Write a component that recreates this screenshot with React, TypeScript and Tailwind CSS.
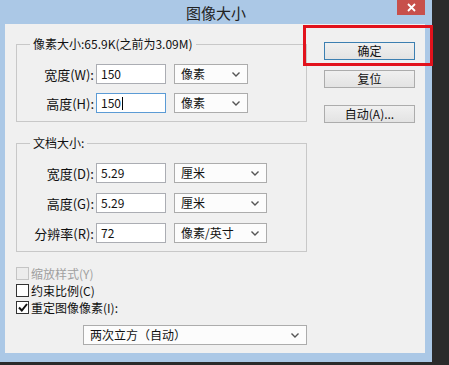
const font = "font-['Microsoft_YaHei','Noto_Sans_CJK_SC','Noto_Sans',sans-serif]";

const Chevron = () => (
  <svg width="8" height="5" viewBox="0 0 8 5" className="shrink-0">
    <polyline points="0.5,0.5 4,4 7.5,0.5" fill="none" stroke="#555" strokeWidth="1.4" />
  </svg>
);

const Select = ({ value, width }: { value: string; width: string }) => (
  <div
    className={`flex h-[20px] items-center justify-between border border-[#acacac] bg-[#fcfcfc] pl-[6px] pr-[7px] text-[12px] leading-none ${width}`}
  >
    <span>{value}</span>
    <Chevron />
  </div>
);

const Field = ({
  label,
  value,
  unit,
  selectWidth,
  focused,
}: {
  label: string;
  value: string;
  unit: string;
  selectWidth: string;
  focused?: boolean;
}) => (
  <div className="flex h-[20px] items-center">
    <span className="w-[77px] text-right text-[13px] leading-none">{label}</span>
    <div
      className={`ml-[2px] flex h-[20px] w-[70px] items-center border bg-white pl-[4px] text-[12px] leading-none ${
        focused ? "border-[#5b9bd5]" : "border-[#abadb3]"
      }`}
    >
      {value}
      {focused && <span className="ml-px h-[13px] w-px bg-black" />}
    </div>
    <div className="ml-[8px]">
      <Select value={unit} width={selectWidth} />
    </div>
  </div>
);

const Group = ({ title, children }: { title: string; children: React.ReactNode }) => (
  <fieldset className="ml-[11px] w-[291px] border border-[#c8c8c8] pb-[8px] pt-[12px]">
    <legend className="ml-[13px] px-[3px] text-[12px] leading-[16px]">{title}</legend>
    <div className="flex flex-col gap-[9px]">{children}</div>
  </fieldset>
);

const Check = ({ label, checked, disabled }: { label: string; checked?: boolean; disabled?: boolean }) => (
  <div className={`ml-[11px] flex h-[17px] items-center gap-[2px] text-[12px] leading-none ${disabled ? "text-[#a0a0a0]" : ""}`}>
    <span
      className={`flex h-[13px] w-[13px] items-center justify-center border ${
        disabled ? "border-[#c4c4c4] bg-[#ececec]" : "border-[#333] bg-white"
      }`}
    >
      {checked && (
        <svg width="10" height="9" viewBox="0 0 10 9">
          <polyline points="1,4.5 3.8,7.5 9,1" fill="none" stroke="#111" strokeWidth="2" />
        </svg>
      )}
    </span>
    <span>{label}</span>
  </div>
);

const Button = ({ label, primary, className }: { label: string; primary?: boolean; className?: string }) => (
  <div
    className={`flex h-[18px] w-[91px] items-center justify-center border bg-gradient-to-b from-[#f0f0f0] to-[#e3e3e3] text-[12px] leading-none ${
      primary ? "border-[#3c7fb1]" : "border-[#acacac]"
    } ${className ?? ""}`}
  >
    {label}
  </div>
);

export default function App() {
  return (
    <div className={`h-[365px] w-[449px] overflow-hidden bg-[#2b2b2b] text-[#111] ${font}`}>
      <div className="relative flex h-[362px] w-[432px] flex-col bg-[#abc8e6]">
        <div className="flex h-[24px] items-center justify-center text-[15px] leading-none text-[#222]">
          图像大小
        </div>
        <div className="absolute right-[7px] top-0 flex h-[15px] w-[28px] items-center justify-center bg-[#c7504b]">
          <svg width="9" height="9" viewBox="0 0 9 9">
            <path d="M1 1 L8 8 M8 1 L1 8" stroke="#fff" strokeWidth="1.8" />
          </svg>
        </div>

        <div className="ml-[5px] flex h-[329px] w-[420px] bg-[#f0f0f0]">
          <div className="flex w-[302px] flex-col">
            <div className="mt-[12px]">
              <Group title="像素大小:65.9K(之前为3.09M)">
                <Field label="宽度(W):" value="150" unit="像素" selectWidth="w-[74px]" />
                <Field label="高度(H):" value="150" unit="像素" selectWidth="w-[74px]" focused />
              </Group>
            </div>
            <div className="mt-[13px]">
              <Group title="文档大小:">
                <div className="flex flex-col gap-[10px]">
                  <Field label="宽度(D):" value="5.29" unit="厘米" selectWidth="w-[93px]" />
                  <Field label="高度(G):" value="5.29" unit="厘米" selectWidth="w-[93px]" />
                  <Field label="分辨率(R):" value="72" unit="像素/英寸" selectWidth="w-[93px]" />
                </div>
              </Group>
            </div>
            <div className="mt-[13px] flex flex-col">
              <Check label="缩放样式(Y)" disabled />
              <Check label="约束比例(C)" />
              <Check label="重定图像像素(I):" checked />
            </div>
            <div className="ml-[78px] mt-[9px]">
              <Select value="两次立方（自动）" width="w-[224px]" />
            </div>
          </div>
          <div className="ml-[17px] flex flex-col pt-[18px]">
            <Button label="确定" primary />
            <Button label="复位" className="mt-[10px]" />
            <Button label="自动(A)..." className="mt-[17px]" />
          </div>
        </div>

        <div className="pointer-events-none absolute left-[303px] top-[25px] h-[41px] w-[130px] border-[3px] border-[#e2121c]" />
      </div>
    </div>
  );
}
